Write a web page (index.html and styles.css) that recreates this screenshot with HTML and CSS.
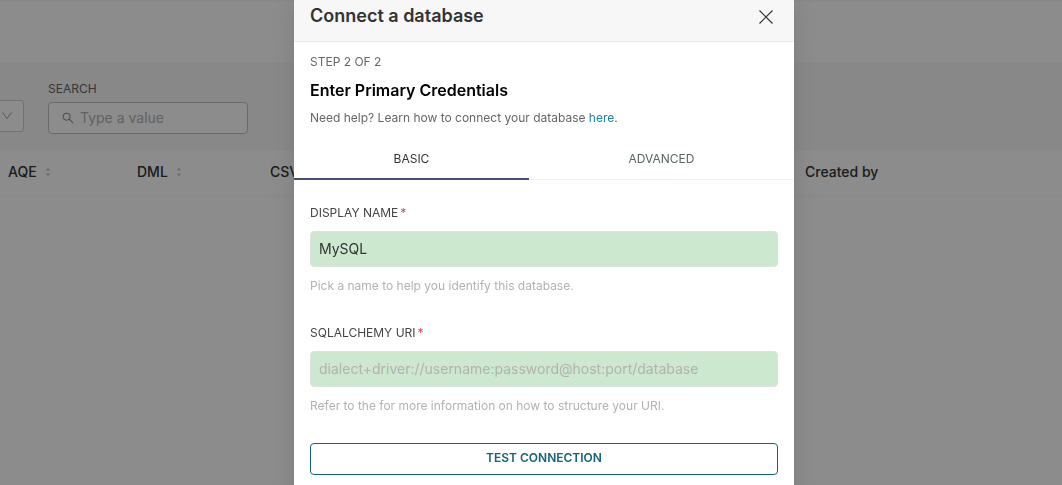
FILE: index.html
```html
<!DOCTYPE html>
<html lang="en">
<head>
<meta charset="utf-8">
<title>Connect a database</title>
<link rel="stylesheet" href="styles.css">
</head>
<body>
<main class="page">
  <div class="page-header"></div>
  <form class="filters">
    <select class="filter-select" aria-label="Filter"><option></option></select>
    <div class="filter">
      <label class="filter-label" for="search">SEARCH</label>
      <div class="search-box">
        <svg class="search-icon" viewBox="64 64 896 896" aria-hidden="true"><path d="M909.6 854.5L649.9 594.8C690.2 542.7 712 479 712 412c0-80.2-31.3-155.4-87.9-212.1-56.6-56.7-132-87.9-212.1-87.9s-155.5 31.3-212.1 87.9C143.2 256.5 112 331.8 112 412c0 80.1 31.3 155.5 87.9 212.1C256.5 680.8 331.8 712 412 712c67 0 130.6-21.8 182.7-62l259.7 259.6a8.2 8.2 0 0 0 11.6 0l43.6-43.5a8.2 8.2 0 0 0 0-11.6zM570.4 570.4C528 612.7 471.8 636 412 636s-116-23.3-158.4-65.6C211.3 528 188 471.8 188 412s23.3-116.1 65.6-158.4C296 211.3 352.2 188 412 188s116.1 23.2 158.4 65.6S636 352.2 636 412s-23.3 116.1-65.6 158.4z"/></svg>
        <input class="search-input" id="search" type="text" placeholder="Type a value">
      </div>
    </div>
  </form>
  <table class="databases">
    <colgroup><col class="col-aqe"><col class="col-dml"><col class="col-csv"><col></colgroup>
    <thead>
      <tr>
        <th><span class="sortable">AQE <svg class="sorter" viewBox="0 0 6 10" aria-hidden="true"><path d="M3 .5L5.500 3.500H.5zM3 9.500L.5 6.500h5z"/></svg></span></th>
        <th><span class="sortable">DML <svg class="sorter" viewBox="0 0 6 10" aria-hidden="true"><path d="M3 .5L5.500 3.500H.5zM3 9.500L.5 6.500h5z"/></svg></span></th>
        <th>CSV</th>
        <th>Created by</th>
      </tr>
    </thead>
  </table>
</main>
<div class="overlay">
  <section class="modal" role="dialog" aria-labelledby="modal-title">
    <header class="modal-header">
      <h1 class="modal-title" id="modal-title">Connect a database</h1>
      <button class="close" type="button" aria-label="Close">
        <svg class="close-icon" viewBox="0 0 14 14" aria-hidden="true"><path d="M.5.5l13 13M13.500.5l-13 13"/></svg>
      </button>
    </header>
    <div class="intro">
      <p class="note">STEP 2 OF 2</p>
      <h2 class="step-title">Enter Primary Credentials</h2>
      <p class="note">Need help? Learn how to connect your database <a class="link" href="#">here</a>.</p>
    </div>
    <div class="tabs" role="tablist">
      <button class="tab tab-active" type="button" role="tab" aria-selected="true">BASIC</button>
      <button class="tab" type="button" role="tab" aria-selected="false">ADVANCED</button>
    </div>
    <form class="credentials">
      <div class="field">
        <label class="field-label" for="name">DISPLAY NAME<span class="required">*</span></label>
        <input class="field-input" id="name" type="text" value="MySQL">
        <p class="hint">Pick a name to help you identify this database.</p>
      </div>
      <div class="field">
        <label class="field-label" for="uri">SQLALCHEMY URI<span class="required">*</span></label>
        <input class="field-input" id="uri" type="text" placeholder="dialect+driver://username:password@host:port/database">
        <p class="hint">Refer to the for more information on how to structure your URI.</p>
      </div>
      <button class="test-button" type="button">TEST CONNECTION</button>
    </form>
  </section>
</div>
</body>
</html>
```
FILE: styles.css
```css
* {
  box-sizing: border-box;
}

body {
  margin: 0;
  overflow: hidden;
  background: #fff;
  color: #333;
  font: 14px/20px Inter, "Liberation Sans", sans-serif;
}

h1, h2, p {
  margin: 0;
}

button, input, select {
  font: inherit;
}

.page-header {
  height: 62px;
  border-top: 2px solid #f7f7f7;
}

.filters {
  display: flex;
  align-items: flex-start;
  gap: 24px;
  padding: 16px 0;
  background: #f7f7f7;
}

.filter-select {
  width: 24px;
  height: 32px;
  margin-top: 22px;
  border: 1px solid #d0d0d0;
  border-left: 0;
  border-radius: 0 4px 4px 0;
  appearance: none;
  background: #fff url("data:image/svg+xml,%3Csvg xmlns='http://www.w3.org/2000/svg' viewBox='0 0 12 12' fill='none' stroke='%23999'%3E%3Cpath d='M1.500 2.500l4.500 6 4.500-6'/%3E%3C/svg%3E") no-repeat 1px 50% / 12px;
}

.filter {
  display: grid;
  gap: 2px;
}

.filter-label {
  color: #666;
  font-size: 12px;
  line-height: 22px;
}

.search-box {
  display: flex;
  align-items: center;
  gap: 6px;
  width: 200px;
  height: 32px;
  padding: 0 12px 0 13px;
  border: 1px solid #bfbfbf;
  border-radius: 4px;
  background: #fff;
}

.search-icon {
  flex: none;
  width: 12px;
  height: 12px;
  fill: #888;
}

.search-input {
  width: 100%;
  min-width: 0;
  padding: 0;
  border: 0;
  background: none;
}

.search-input::placeholder {
  color: #b2b2b2;
}

.databases {
  width: 100%;
  table-layout: fixed;
  border-collapse: collapse;
}

.col-aqe {
  width: 129px;
}

.col-dml {
  width: 133px;
}

.col-csv {
  width: 535px;
}

.databases th {
  height: 45px;
  padding: 0 8px;
  border-bottom: 1px solid #f7f7f7;
  font-weight: 500;
  text-align: left;
}

.sortable {
  display: flex;
  align-items: center;
  gap: 8px;
}

.sorter {
  width: 6px;
  height: 10px;
  fill: #ccc;
}

.overlay {
  position: fixed;
  inset: 0;
  display: flex;
  align-items: flex-start;
  justify-content: center;
  padding-left: 26px;
  background: rgba(0, 0, 0, 0.45);
}

.modal {
  width: 500px;
  min-height: 100%;
  background: #fff;
  box-shadow: 0 3px 6px -4px rgba(0, 0, 0, 0.12), 0 6px 16px rgba(0, 0, 0, 0.08), 0 9px 28px 8px rgba(0, 0, 0, 0.05);
}

.modal-header {
  display: flex;
  align-items: flex-start;
  justify-content: space-between;
  padding: 4px 20px 11px 16px;
  border-bottom: 1px solid #e8e8e8;
  background: #f7f7f7;
}

.modal-title {
  font-size: 18px;
  font-weight: 600;
  line-height: 24px;
}

.close {
  display: flex;
  padding: 6px 1px;
  border: 0;
  background: none;
}

.close-icon {
  width: 14px;
  height: 14px;
  fill: none;
  stroke: #333;
  stroke-width: 1.2;
}

.intro {
  display: grid;
  gap: 8px;
  padding: 10px 16px;
}

.note {
  color: #666;
  font-size: 12px;
}

.step-title {
  color: #000;
  font-size: 16px;
  font-weight: 600;
}

.link {
  color: #1985a0;
  text-decoration: none;
}

.tabs {
  display: flex;
  box-shadow: inset 0 -1px #f0f0f0;
}

.tab {
  flex: 1 1 auto;
  height: 42px;
  padding: 2px 0 0;
  border: 0;
  border-bottom: 2px solid transparent;
  background: none;
  color: #5a6664;
  font-size: 12px;
}

.tab-active {
  border-color: #444e7c;
  color: #333;
}

.credentials {
  display: grid;
  gap: 26px;
  padding: 23px 16px;
}

.field {
  display: grid;
  gap: 8px;
}

.field-label {
  color: #444;
  font-size: 12px;
}

.required {
  margin-left: 2px;
  color: #e04355;
}

.field-input {
  width: 100%;
  height: 36px;
  padding: 0 8px 2px;
  border: 1px solid #e0e0e0;
  border-radius: 4px;
  background: #cce8cf;
  color: #333;
}

.field-input::placeholder {
  color: #b2b2b2;
}

.hint {
  color: #b2b2b2;
  font-size: 12px;
  line-height: 22px;
}

.test-button {
  height: 32px;
  padding: 0 0 2px;
  border: 1px solid #156378;
  border-radius: 4px;
  background: #fff;
  color: #156378;
  font-size: 12px;
  font-weight: 600;
}
```
